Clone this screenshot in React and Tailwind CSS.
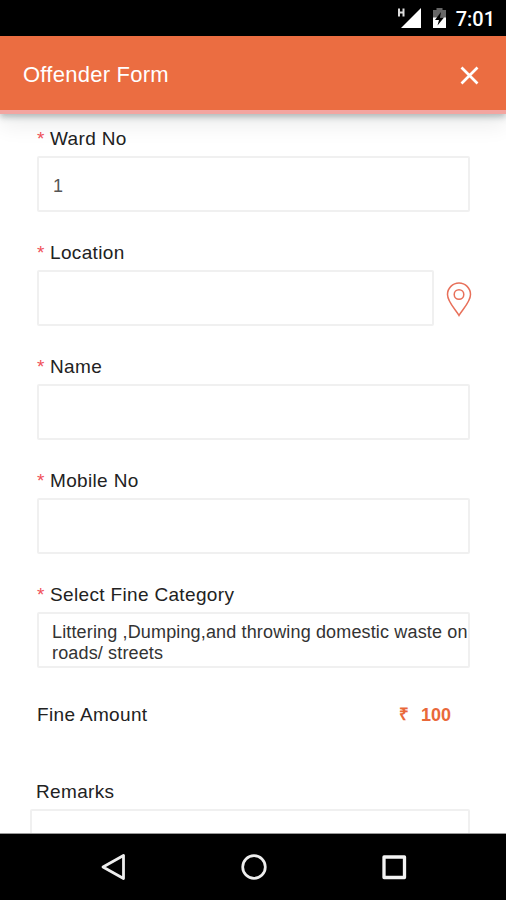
const Label = ({ text, required = true }) => (
  <div className="h-7 whitespace-nowrap text-[19px] leading-7 tracking-[0.34px] text-[#222]">
    {required && <span className="inline-block w-[13px] text-[#f0505a]">*</span>}
    {text}
  </div>
);

const Field = ({ label, value }) => (
  <div className="mb-[27px]">
    <Label text={label} />
    <div className="mt-[3px] flex h-14 items-center rounded-xs border-2 border-[#f0f0f0] px-3.5 pt-1 text-[18px] text-[#555]">
      {value}
    </div>
  </div>
);

const StatusBar = () => (
  <div className="relative z-20 flex h-9 shrink-0 items-center justify-end bg-black pr-[11px] text-white">
    <svg width="26" height="24" viewBox="0 0 26 24" fill="none" className="mr-2.5">
      <path d="M3 2.500v8M7.500 2.500v8M3 6.500h4.500" stroke="#ddd" strokeWidth="2" />
      <path d="M25 2v20H5z" fill="#fff" />
    </svg>
    <svg width="15" height="24" viewBox="0 0 15 24" className="mr-[9px]">
      <path d="M1 4h3.500V2h6v2H14v8H1z" fill="#666" />
      <path d="M1 11.500h13V22H1z" fill="#fff" />
      <path d="M9 6L3 14h4L5.500 19.500 12 11.500H8z" fill="#000" />
    </svg>
    <span className="pt-0.5 font-[Roboto] text-[20px] font-medium leading-6">7:01</span>
  </div>
);

const Header = () => (
  <header className="relative z-10 flex h-[78px] shrink-0 items-center justify-between border-b-4 border-[#f3a5a0] bg-[#eb6d41] pl-[23px] pr-[27px] text-white shadow-[0_3px_6px_rgba(60,80,80,0.35),0_12px_20px_rgba(0,0,0,0.07)]">
    <h1 className="pt-1 text-[22px] leading-7 tracking-[0.25px]">Offender Form</h1>
    <svg width="19" height="19" viewBox="0 0 19 19" fill="none" stroke="#fff" strokeWidth="2.7" className="mt-1">
      <path d="M1.500 1.500l16 16M17.500 1.500l-16 16" />
    </svg>
  </header>
);

const NavBar = () => (
  <nav className="relative flex h-[67px] shrink-0 items-center justify-center gap-[112px] border-t border-[#999] bg-black pl-px">
    <svg width="28" height="30" viewBox="0 0 28 30" fill="none" stroke="#eee" strokeWidth="2.800" strokeLinejoin="round">
      <path d="M23.500 3.500v23L3 15z" />
    </svg>
    <svg width="28" height="30" viewBox="0 0 28 30" fill="none" stroke="#eee" strokeWidth="2.700">
      <circle cx="14" cy="15" r="11.300" />
    </svg>
    <svg width="28" height="30" viewBox="0 0 28 30" fill="none" stroke="#f4f4f4" strokeWidth="3.300" strokeLinejoin="round">
      <path d="M4 5h20.500v20.500H4z" />
    </svg>
  </nav>
);

const App = () => {
  return (
    <div className="flex h-[900px] w-[506px] flex-col overflow-hidden bg-white font-['Liberation_Sans',Arial,sans-serif]">
      <StatusBar />
      <Header />

      <main className="min-h-0 flex-1 overflow-hidden pl-[37px] pr-9 pt-[11px]">
        <Field label="Ward No" value="1" />

        <div className="mb-[27px]">
          <Label text="Location" />
          <div className="mt-[3px] flex items-center">
            <div className="h-14 w-[397px] rounded-xs border-2 border-[#f0f0f0]" />
            <svg width="26" height="36" viewBox="0 0 26 36" fill="none" stroke="#e8705a" strokeWidth="1.5" className="ml-3 mt-1 -mr-2 shrink-0">
              <path d="M13 33.500C10 28 1.500 20 1.500 12.500a11.500 11.500 0 0 1 23 0C24.500 20 16 28 13 33.500z" />
              <circle cx="13" cy="12.500" r="4.800" />
            </svg>
          </div>
        </div>

        <Field label="Name" />
        <Field label="Mobile No" />

        <div className="mb-[33px]">
          <Label text="Select Fine Category" />
          <div className="mt-[3px] h-14 whitespace-nowrap rounded-xs border-2 border-[#f0f0f0] pl-[13px] pt-2 text-[18px] leading-[21px] tracking-[0.15px] text-[#333]">
            Littering ,Dumping,and throwing domestic waste on
            <br />
            roads/ streets
          </div>
        </div>

        <div className="mb-[49px] flex h-7 items-center justify-between pr-[19px]">
          <span className="text-[19px] tracking-[0.34px] text-[#222]">Fine Amount</span>
          <span className="flex items-center gap-3 text-[18px] font-bold text-[#e9683a]">
            <span className="text-[17px]">₹</span>
            <span>100</span>
          </span>
        </div>

        <div className="-ml-[7px]">
          <div className="pl-1.5">
            <Label text="Remarks" required={false} />
          </div>
          <div className="mt-[3px] h-14 rounded-xs border-2 border-[#f0f0f0]" />
        </div>
      </main>

      <NavBar />
    </div>
  );
};

export default App;
